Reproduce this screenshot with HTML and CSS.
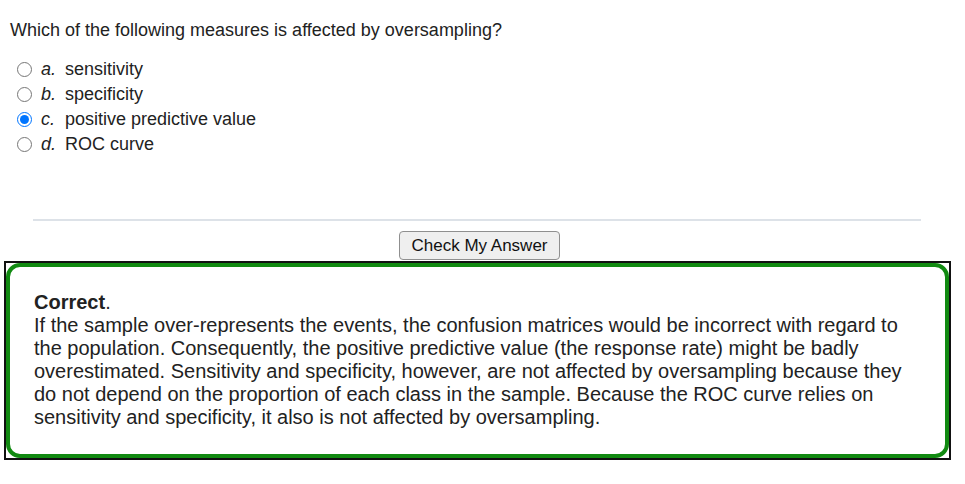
FILE: index.html
```html
<!DOCTYPE html>
<html>
<head>
<meta charset="utf-8">
<link rel="stylesheet" href="styles.css">
</head>
<body>
<div class="quiz">
  <p class="question">Which of the following measures is affected by oversampling?</p>
  <div class="options">
    <label class="opt"><input type="radio" name="q"><span class="letter">a.</span><span class="txt">sensitivity</span></label>
    <label class="opt"><input type="radio" name="q"><span class="letter">b.</span><span class="txt">specificity</span></label>
    <label class="opt"><input type="radio" name="q" checked><span class="letter">c.</span><span class="txt">positive predictive value</span></label>
    <label class="opt"><input type="radio" name="q"><span class="letter">d.</span><span class="txt">ROC curve</span></label>
  </div>
  <hr class="sep">
  <div class="btn-row"><button class="check">Check My Answer</button></div>
  <div class="feedback-outer">
    <div class="feedback">
      <b>Correct</b>.<br>
      If the sample over-represents the events, the confusion matrices would be incorrect with regard to the population. Consequently, the positive predictive value (the response rate) might be badly overestimated. Sensitivity and specificity, however, are not affected by oversampling because they do not depend on the proportion of each class in the sample. Because the ROC curve relies on sensitivity and specificity, it also is not affected by oversampling.
    </div>
  </div>
</div>
</body>
</html>
```

FILE: styles.css
```css
html, body {
  margin: 0;
  padding: 0;
  background: #fff;
}
body {
  font-family: "Liberation Sans", Arial, sans-serif;
  color: #222;
}
.quiz {
  padding: 0 14px 0 4px;
}
.question {
  margin: 0;
  padding: 19px 0 0 6px;
  font-size: 18px;
  line-height: 22px;
}
.options {
  margin-top: 16px;
  display: flex;
  flex-direction: column;
}
.opt {
  display: flex;
  align-items: center;
  height: 25px;
  font-size: 18px;
}
.opt input {
  margin: 0 0 0 13px;
  width: 15px;
  height: 15px;
}
.letter {
  font-style: italic;
  width: 24px;
  margin-left: 9px;
}
.sep {
  margin: 62px 30px 0 29px;
  border: 0;
  height: 2px;
  background: #dde2e8;
}
.btn-row {
  display: flex;
  justify-content: center;
  margin-top: 10px;
  padding-left: 4px;
}
.check {
  font-family: "Liberation Sans", Arial, sans-serif;
  font-size: 17px;
  color: #111;
  height: 29px;
  width: 161px;
  padding: 0;
  background: #efefef;
  border: 1px solid #8f8f8f;
  border-radius: 4px;
}
.feedback-outer {
  margin-top: 1px;
  border: 2px solid #111;
  width: 943px;
}
.feedback {
  border: 4px solid #118a11;
  border-radius: 14px;
  padding: 24px 20px 25px 24px;
  font-size: 20px;
  line-height: 23px;
  color: #222;
}
```
